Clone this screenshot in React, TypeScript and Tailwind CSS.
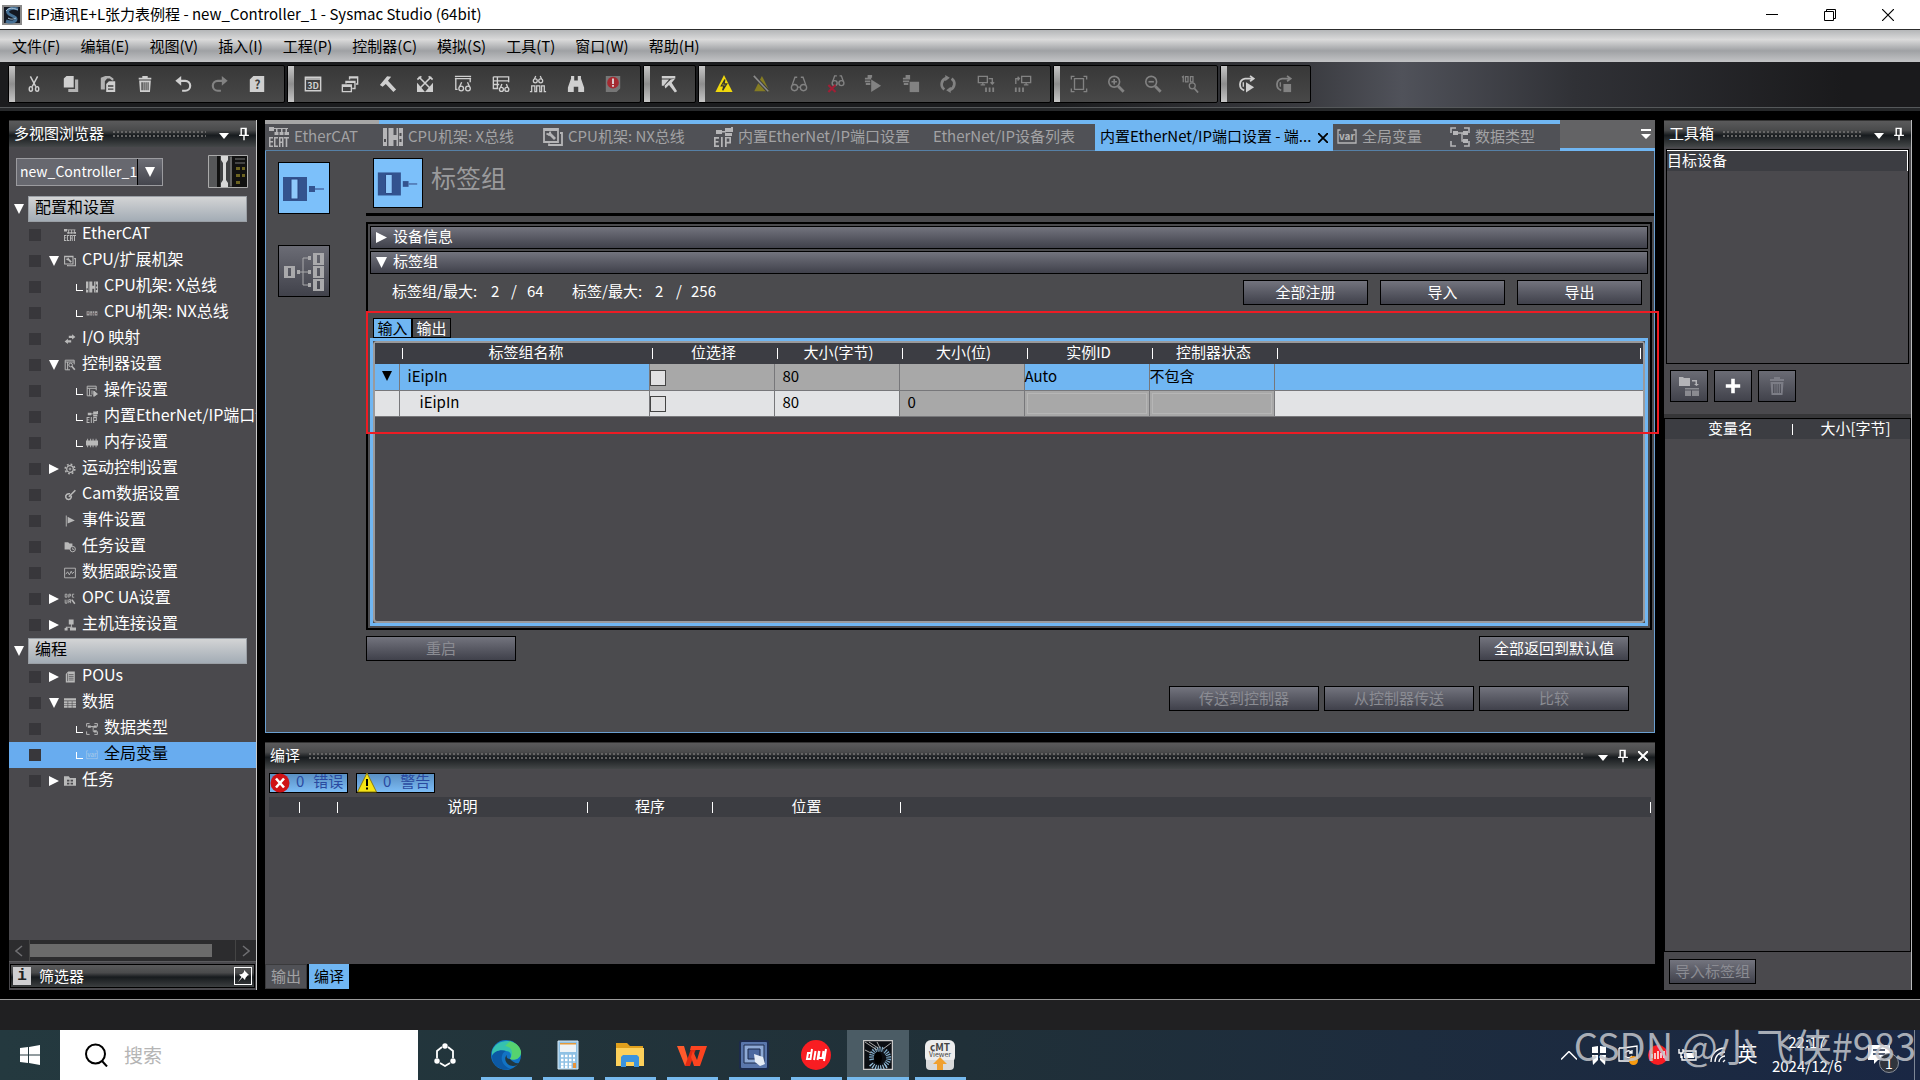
import { type FC, type ReactNode, useState } from "react";
import clsx from "clsx";

const svgText = "Noto Sans CJK SC, sans-serif";

const icons: Record<string, ReactNode> = {
	cut: (
		<g fill="none" stroke="currentColor" strokeWidth="1.6">
			<path d="M6 1.5 12 13M14 1.5 8 13" />
			<ellipse cx="6.5" cy="15.5" rx="1.8" ry="2.6" />
			<ellipse cx="13.5" cy="15.5" rx="1.8" ry="2.6" />
		</g>
	),
	copy: (
		<g fill="currentColor">
			<path d="M5 1h8v13H2V4z" />
			<path d="M14.5 5H18v14H7v-3.5h7.5z" opacity=".8" />
		</g>
	),
	paste: (
		<g fill="currentColor">
			<path d="M2 3 7 1h5l4 3v2h-1.5L12 4H9L6.500 7v9H2z" opacity=".8" />
			<path d="M11 7h7v12H8v-9zm-1 4.500V13h6v-1.500zm0 3.500v1.500h6V15z" fillRule="evenodd" />
		</g>
	),
	trash: (
		<g fill="currentColor">
			<path d="M7 1h6v2h4v2H3V3h4z" />
			<path d="M3.5 6h13l-1 13h-11zM6 8v9h1.500V8zm2.400 0v9h1.200V8zm2.200 0v9h1.200V8zm2.200 0v9H14V8z" fillRule="evenodd" />
		</g>
	),
	undo: (
		<g fill="none" stroke="currentColor" strokeWidth="2.4">
			<path d="M4 6.5h8.500a5.200 5.200 0 0 1 0 11H9" />
			<path d="M8 1 1.500 6.500 8 12z" fill="currentColor" stroke="none" />
		</g>
	),
	redo: (
		<g fill="none" stroke="currentColor" strokeWidth="2.4">
			<path d="M16 6.5H7.500a5.200 5.200 0 0 0 0 11H11" />
			<path d="M12 1l6.500 5.500L12 12z" fill="currentColor" stroke="none" />
		</g>
	),
	help: (
		<g>
			<path d="M6 1h12v18H2V5z" fill="currentColor" />
			<text x="10.5" y="15" fontSize="13" fontWeight="700" textAnchor="middle" fill="#3c3c3c" fontFamily={svgText}>?</text>
		</g>
	),
	threeD: (
		<g>
			<path d="M1.5 2.5h17v15h-17zM1.5 4.500h17" fill="none" stroke="currentColor" strokeWidth="1.6" />
			<text x="10" y="15" fontSize="10" fontWeight="700" textAnchor="middle" fill="currentColor" fontFamily={svgText}>3D</text>
		</g>
	),
	windows: (
		<g fill="none" stroke="currentColor" strokeWidth="1.5">
			<path d="M1.5 11h10v7.500h-10zM1.500 12.500h10" />
			<path d="M5.500 9.500V7h10v8h-3M5.500 8.200h10" />
			<path d="M9.500 5V2h9v8h-2M9.500 3h9" />
		</g>
	),
	hammer: <path d="M1 11 9 1.500l4.500.5L10 6.500 19 16l-3 3-8.500-9L4 13z" fill="currentColor" />,
	tools: (
		<g fill="none" stroke="currentColor" strokeWidth="1.8">
			<path d="M3 2 16 15M17 2 4 15" />
			<path d="M1.5 5 6 1.500M14 1.500 18.500 5" />
			<path d="M2 11l6 7H2zM18 11v7h-6z" fill="currentColor" />
		</g>
	),
	watch: (
		<g fill="none" stroke="currentColor" strokeWidth="1.5">
			<path d="M1 4h18M1 1.500h18M2 3v13h2M18 3v5" />
			<circle cx="8" cy="15" r="2.6" />
			<circle cx="15.500" cy="15" r="2.6" />
			<path d="M6.500 12.500 8.500 8M17 12.500 15 8" />
		</g>
	),
	watchTable: (
		<g fill="none" stroke="currentColor" strokeWidth="1.5">
			<path d="M1.5 2h17v6M1.5 2v13H7M1.5 6.500h17M1.5 10.500H8M6 2v13" />
			<circle cx="10.500" cy="16" r="2.2" />
			<circle cx="16.500" cy="16" r="2.2" />
			<path d="M9.500 14l1.500-4M17.500 14 16 10" />
		</g>
	),
	watchWave: (
		<g fill="none" stroke="currentColor" strokeWidth="1.4">
			<circle cx="7" cy="6.500" r="2.200" />
			<circle cx="13" cy="6.500" r="2.200" />
			<path d="M6 4.500 7.500 1M14 4.500 12.500 1M1 18.500h2V12h3.500v6.500h2V12H12v6.500h2V12h3v6.500h2" />
		</g>
	),
	binoculars: <path d="M4.500 1H8v5h4V1h3.500v3L19 14v5h-6.500v-6h-5v6H1v-5L4.500 4z" fill="currentColor" />,
	alertDoc: (
		<g>
			<path d="M2 1h16v14l-4 4H2z" fill="#777" />
			<circle cx="10" cy="8.500" r="6.500" fill="#a52a31" />
			<path d="M9 4h2v6H9zM9 11h2v2H9z" fill="#ddd" />
		</g>
	),
	build: (
		<g fill="currentColor">
			<path d="M2 1h15v3H2zM2 5h8L4 12H2z" />
			<path d="m5 12 7-7 5-1-4 4.500L19 18l-2.500 1.500L10 11l-4 4z" />
		</g>
	),
	online: (
		<g>
			<path d="M10 0 19.500 19H.500z" fill="#f0d80c" />
			<path d="M11 5 7 12h3l-1.500 5 4.500-7h-3z" fill="none" stroke="#333" strokeWidth="1.400" />
		</g>
	),
	offline: (
		<g>
			<path d="M11 1 19.500 18h-17z" fill="#857c22" />
			<path d="m2 1 16 17" stroke="#3c3c3c" strokeWidth="4" />
			<path d="m2 1 16 17" stroke="#8a8a8a" strokeWidth="1.800" />
		</g>
	),
	glasses: (
		<g fill="none" stroke="currentColor" strokeWidth="1.500">
			<circle cx="5" cy="14" r="3.500" />
			<circle cx="15" cy="14" r="3.500" />
			<path d="M2.500 11 5.500 2.500h2.500M17.500 11l-3-8.500H12M8.500 13.500h3" />
		</g>
	),
	glassesOff: (
		<g fill="none" stroke="currentColor" strokeWidth="1.500">
			<circle cx="8.500" cy="9" r="2.800" />
			<circle cx="16" cy="9" r="2.800" />
			<path d="M6.500 7 8.500 1H11M18 7l-2-6h-2" />
			<path d="m1.500 11 8 8M9.500 11l-8 8" stroke="#a01f35" strokeWidth="2.400" />
		</g>
	),
	run: (
		<g fill="currentColor">
			<path d="M1 3h7v2H1zM1 6h6v2H1zM2 9h5v2H2zM4 0h5v3H4z" />
			<path d="m8 5 11 7-11 7z" />
		</g>
	),
	stop: (
		<g fill="currentColor">
			<path d="M1 3h8v2H1zM1 6h7v2H1zM2 9h5v2H2zM4 0h5v3H4z" />
			<path d="M8.500 7.500H19V19H8.500z" />
		</g>
	),
	cycle: (
		<g fill="none" stroke="currentColor" strokeWidth="3">
			<path d="M8 3.500a7 7 0 0 0-2 12.500M12 16.500A7 7 0 0 0 14 4" />
			<path d="M7 0l5 3-5 4zM13 20l-5-3 5-4z" fill="currentColor" stroke="none" />
		</g>
	),
	toDevice: (
		<g fill="none" stroke="currentColor" strokeWidth="1.5">
			<path d="M1.500 1.500h10v7h-10zM4 11h5M6.500 9v2M13 4h4v6M15 8l2 2 2-2" />
			<path d="M9 14h2v5H9zM13 14h2v5h-2zM17 14h2v5h-2z" fill="currentColor" stroke="none" />
		</g>
	),
	fromDevice: (
		<g fill="none" stroke="currentColor" strokeWidth="1.5">
			<path d="M8.500 1.500h10v7h-10zM11 11h5M13.500 9v2M2 10V4h4M4 2l2 2-2 2" />
			<path d="M1 14h2v5H1zM5 14h2v5H5zM9 14h2v5H9z" fill="currentColor" stroke="none" />
		</g>
	),
	fit: (
		<g fill="none" stroke="currentColor" strokeWidth="1.5">
			<path d="M5 4h10v12H5zM1.500 5V1.500H5M15 1.500h3.500V5M18.500 15v3.500H15M5 18.500H1.500V15" />
		</g>
	),
	zoomIn: (
		<g fill="none" stroke="currentColor" strokeWidth="1.8">
			<circle cx="8" cy="7.500" r="6" />
			<path d="M5 7.500h6M8 4.500v6" />
			<path d="m12.500 12.500 6 6" strokeWidth="3.200" />
		</g>
	),
	zoomOut: (
		<g fill="none" stroke="currentColor" strokeWidth="1.8">
			<circle cx="8" cy="7.500" r="6" />
			<path d="M5 7.500h6" />
			<path d="m12.500 12.500 6 6" strokeWidth="3.200" />
		</g>
	),
	zoom100: (
		<g fill="none" stroke="currentColor" strokeWidth="1.4">
			<path d="M1 2.500 2.500 1.500V8M5 1.700h2.800v6H5zM10.500 1.700h2.800v6h-2.800z" />
			<circle cx="12.500" cy="12" r="3.300" />
			<path d="m15 15 4 4.500" strokeWidth="2" />
		</g>
	),
	simRun: (
		<g fill="none" stroke="currentColor" strokeWidth="2">
			<path d="M18 4H9a6.700 6.700 0 0 0-1 13M14.500 1l4 3-4 3" />
			<path d="m10 8 9 5.500-9 6z" fill="currentColor" stroke="none" />
			<path d="M7 8v5" strokeWidth="1.500" />
		</g>
	),
	simStop: (
		<g fill="none" stroke="currentColor" strokeWidth="2">
			<path d="M17 4H9a6.700 6.700 0 0 0-1 13M14.500 1l4 3-4 3" />
			<path d="M10.500 10H19v9h-8.500z" fill="currentColor" stroke="none" />
			<path d="M7 8v5" strokeWidth="1.500" />
		</g>
	),
	ecat: (
		<g fill="currentColor">
			<path d="M0 0h5v4H0zM5 1h14v1H5zM7 2h1.500v4H7zM12 2h1.500v4H12zM16.500 2H18v4h-1.500zM5.500 5h4v3h-4zM10.500 5h4v3h-4zM15.500 5H20v3h-4.500z" />
			<path d="M0 10h4v1.500H1.500v2.500H4v1.500H1.500v3H4V20H0zM5 10h4v1.500H6.500v7H9V20H5zM10 10h4.500v10H13v-4h-1.500v4H10zM11.500 11.500v3H13v-3zM15 10h5v1.500h-1.700V20h-1.600v-8.500H15z" fillRule="evenodd" />
		</g>
	),
	rack: (
		<g fill="currentColor">
			<path d="M0 1h4v18H0zM5.500 1h5v18h-5zM10.500 8h3V1H20v18h-6.500v-6h-3z" />
			<path d="M1 12h2v3H1zM16.500 6h2v3h-2zM16.500 12h2v3h-2zM15 1h.8v18H15z" fill="#4c4c50" />
		</g>
	),
	nxRack: (
		<g fill="currentColor">
			<path d="M1 7h5v7H1zM7 7h3v7H7zM11 7h3v7h-3zM15 7h4v7h-4z" opacity=".8" />
			<path d="M2 9h3v2H2zM8 10h1v3H8zM12 10h1v3h-1zM16 10h2v2h-2z" fill="#5b4648" />
		</g>
	),
	cpuRack: (
		<g fill="none" stroke="currentColor" strokeWidth="1.8">
			<path d="M1 2h14v13H1zM1 3h14" />
			<path d="m6 6 6 6" strokeWidth="2.800" />
			<path d="M3.500 6.500 6 8l1.500-3.500" />
			<path d="M17 6h2v12H6v-1.500" />
		</g>
	),
	eip: (
		<g fill="currentColor">
			<path d="M3 3h6v4H3zM9 4h4v1.500H9zM12 1h7v4h-7zM12 6h7v3h-7zM18 0h2v5h-2z" />
			<path d="M1 10h5v1.700H2.700v2.300H5.500v1.600H2.700v2.700H6V20H1zM8 10h1.700v10H8zM12 10h6v6.500h-4.300V20H12zM13.700 11.600v3.200h2.600v-3.200z" fillRule="evenodd" />
		</g>
	),
	io: <path d="M19 6.500 13.500 2v2.500H8v4h5.500V11zM1 14l5.500-4.500V12H12v4H6.500v2.500z" fill="currentColor" />,
	ctrl: (
		<g fill="none" stroke="currentColor" strokeWidth="1.6">
			<path d="M2 2h15v7M2 2v16h8M2 5h15M6 5v13" />
			<circle cx="11" cy="10" r="3" />
			<path d="m13 12 5 6" strokeWidth="2.800" />
		</g>
	),
	op: (
		<g fill="none" stroke="currentColor" strokeWidth="1.6">
			<path d="M2 2h15v7M2 2v16h8M2 5.500h15M6 6v12M10 9v7" />
			<path d="m13 10 6 5-6 4z" fill="currentColor" />
		</g>
	),
	memory: (
		<path d="M0 6h2V3h1.500v3H7V3h1.500v3H11V3h1.500v3H16V3h1.500v3H20v8h-2.500v3H16v-3h-3.500v3H11v-3H8.500v3H7v-3H3.500v3H2v-3H0z" fill="currentColor" />
	),
	gear: (
		<g fill="none" stroke="currentColor">
			<circle cx="10" cy="10" r="5.500" strokeWidth="2.200" />
			<circle cx="10" cy="10" r="8" strokeWidth="2.600" strokeDasharray="3 3.280" />
			<circle cx="10" cy="10" r="1.500" strokeWidth="1.500" />
		</g>
	),
	cam: (
		<g fill="none" stroke="currentColor" strokeWidth="2.600">
			<path d="M10 8c-4-1-8 2-7 6s8 5 9 0c1-2-1-3-2-3" />
			<path d="M8 13 19 2" />
		</g>
	),
	flag: (
		<g fill="currentColor">
			<path d="M3 1h1.500v18H3z" />
			<path d="m6 3 12 6-12 5z" />
		</g>
	),
	folderClock: (
		<g>
			<path d="M1 2h6l2 2h5v10H1z" fill="currentColor" />
			<circle cx="14.500" cy="13.500" r="4.500" fill="#4a494d" stroke="currentColor" strokeWidth="1.600" />
			<path d="M14.500 11v3h2.500" fill="none" stroke="currentColor" strokeWidth="1.400" />
		</g>
	),
	trace: (
		<g fill="none" stroke="currentColor" strokeWidth="1.5">
			<path d="M1 2h18v16H1z" />
			<path d="m3 12 3-4 3 5 3-6 2 4 3-3" />
		</g>
	),
	opc: (
		<g fill="none" stroke="currentColor" strokeWidth="1.4">
			<path d="M2 2h3v5H2zM8 8V2h3v3H8M17 2h-3v5h3M2 11v6h3v-6M8 17v-6h3v6M8 14h3" />
			<path d="m13 11 5 7" strokeWidth="2.600" />
		</g>
	),
	host: (
		<g fill="currentColor">
			<path d="M8 1h8v8H8zM11.500 9H13v4h-1.500zM3 13h11v1.500H4.500V17H3z" />
			<path d="M1 15h5v4H1zM10 14h10v5H10z" />
		</g>
	),
	pou: (
		<g>
			<path d="M7 1h11v18H3V5z" fill="currentColor" />
			<path d="M8 6h8M8 9h8M8 12h8M8 15h8M6 4v13" stroke="#4a494d" strokeWidth="1.200" />
		</g>
	),
	table: (
		<path d="M0 2h20v4H0zM0 7h6v3H0zM7 7h6v3H7zM14 7h6v3h-6zM0 11h6v3H0zM7 11h6v3H7zM14 11h6v3h-6zM0 15h6v3H0zM7 15h6v3H7zM14 15h6v3h-6z" fill="currentColor" />
	),
	types: (
		<g fill="none" stroke="currentColor" strokeWidth="1.6">
			<path d="M1 6V1h5M14 1h5v5M19 14v5h-5M6 19H1v-5" />
			<path d="M7 6h5v8h3M8 6h6" strokeWidth="1.400" />
			<path d="M3 4h5v4H3zM13 4h5v4h-5zM13 12h5v4h-5z" fill="currentColor" stroke="none" />
		</g>
	),
	vars: (
		<g>
			<path d="M3.500 3H1v13h2.500M16.500 3H19v13h-2.500M1 16h18" fill="none" stroke="currentColor" strokeWidth="1.3" />
			<text x="10" y="12.500" fontSize="10" fontWeight="700" textAnchor="middle" fill="currentColor" fontFamily={svgText}>var</text>
		</g>
	),
	task: (
		<g>
			<path d="M0 2h8l2 3h10v13H0z" fill="currentColor" />
			<path d="M5 8h4v3H5zM11 8h4v3h-4zM5 13h4v3H5zM11 13h4v3h-4z" fill="#4a494d" />
		</g>
	),
	importTree: (
		<g fill="currentColor">
			<path d="M0 1h4l1 1h6v8H0zM13 4h5v5h-1.500V5.500H13zM15 8h5l-2.500 2z" />
			<path d="M6 12h14v1.500H6zM6 14.500h6V20H6zM13 14.500h7V20h-7z" opacity=".6" />
		</g>
	),
	plus: <path d="M8 2h4v6h6v4h-6v6H8v-6H2V8h6z" fill="currentColor" />,
	pin: (
		<g fill="none" stroke="currentColor" strokeWidth="2">
			<path d="M6 11V2h7v9M3 12h14M10 12v7M12 3v8" />
		</g>
	),
};

const Icon: FC<{ name: string; className?: string }> = ({ name, className }) => (
	<svg viewBox="0 0 20 20" className={clsx("shrink-0", className)} aria-hidden="true">
		{icons[name]}
	</svg>
);

const Arrow: FC<{ open?: boolean; className?: string }> = ({ open, className }) => (
	<svg viewBox="0 0 10 10" className={clsx("h-2.5 w-2.5 shrink-0", className)} aria-hidden="true">
		<path d={open ? "M0 0h10L5 10z" : "M0 0l10 5-10 5z"} fill="currentColor" />
	</svg>
);

const menus = ["文件(F)", "编辑(E)", "视图(V)", "插入(I)", "工程(P)", "控制器(C)", "模拟(S)", "工具(T)", "窗口(W)", "帮助(H)"];

// a leading "-" marks a disabled command
const toolGroups = [
	{ width: "w-[277px]", items: ["cut", "copy", "paste", "trash", "undo", "-redo", "help"] },
	{ width: "w-[354px]", items: ["threeD", "windows", "hammer", "tools", "watch", "watchTable", "watchWave", "binoculars", "alertDoc"] },
	{ width: "w-[53px]", items: ["build"] },
	{ width: "w-[353px]", items: ["online", "offline", "-glasses", "-glassesOff", "-run", "-stop", "-cycle", "-toDevice", "-fromDevice"] },
	{ width: "w-[165px]", items: ["-fit", "-zoomIn", "-zoomOut", "-zoom100"] },
	{ width: "w-[91px]", items: ["simRun", "-simStop"] },
];

type Node = { label: string; icon: string; child?: boolean; open?: boolean; selected?: boolean };

const configNodes: Node[] = [
	{ label: "EtherCAT", icon: "ecat" },
	{ label: "CPU/扩展机架", icon: "cpuRack", open: true },
	{ label: "CPU机架: X总线", icon: "rack", child: true },
	{ label: "CPU机架: NX总线", icon: "nxRack", child: true },
	{ label: "I/O 映射", icon: "io" },
	{ label: "控制器设置", icon: "ctrl", open: true },
	{ label: "操作设置", icon: "op", child: true },
	{ label: "内置EtherNet/IP端口设置", icon: "eip", child: true },
	{ label: "内存设置", icon: "memory", child: true },
	{ label: "运动控制设置", icon: "gear", open: false },
	{ label: "Cam数据设置", icon: "cam" },
	{ label: "事件设置", icon: "flag" },
	{ label: "任务设置", icon: "folderClock" },
	{ label: "数据跟踪设置", icon: "trace" },
	{ label: "OPC UA设置", icon: "opc", open: false },
	{ label: "主机连接设置", icon: "host", open: false },
];

const programNodes: Node[] = [
	{ label: "POUs", icon: "pou", open: false },
	{ label: "数据", icon: "table", open: true },
	{ label: "数据类型", icon: "types", child: true },
	{ label: "全局变量", icon: "vars", child: true, selected: true },
	{ label: "任务", icon: "task", open: false },
];

const TitleBar: FC = () => (
	<header className="flex h-[30px] shrink-0 items-center border-b border-[#2c2c2c] bg-white text-black">
		<svg viewBox="0 0 20 20" className="ml-[2px] h-5 w-5" aria-hidden="true">
			<path d="M0 0h20v20H0z" fill="#8a8a8a" />
			<path d="M2 2h16v16H2z" fill="#131722" />
			<path d="M16 4C9 2 4 5 6 8s8 3 8 6-5 4-10 2" fill="none" stroke="#456f94" strokeWidth="3" />
			<path d="M4 6c3-4 8-3 12-1M6 13c3 2 6 1 8 0" fill="none" stroke="#a8c4da" />
		</svg>
		<h1 className="ml-[5px] flex-1 pb-0.5 text-[15px] leading-6">EIP通讯E+L张力表例程 - new_Controller_1 - Sysmac Studio (64bit)</h1>
		<div className="flex pr-[3px]">
			<button type="button" aria-label="最小化" className="flex h-7 w-[58px] items-center justify-center">
				<span className="h-px w-3 bg-black" />
			</button>
			<button type="button" aria-label="还原" className="flex h-7 w-[58px] items-center justify-center">
				<svg viewBox="0 0 12 12" className="h-3 w-3" fill="none" stroke="#000">
					<path d="M.5 2.5h9v9h-9zM2.5 2.5v-2h9v9h-2" />
				</svg>
			</button>
			<button type="button" aria-label="关闭" className="flex h-7 w-[58px] items-center justify-center">
				<svg viewBox="0 0 12 12" className="h-3 w-3" fill="none" stroke="#000" strokeWidth="1.2">
					<path d="m0 0 12 12M12 0 0 12" />
				</svg>
			</button>
		</div>
	</header>
);

const MenuBar: FC = () => (
	<nav className="flex h-8 shrink-0 items-center gap-5 bg-[linear-gradient(#b4b6b8,#dadada_30%,#9fa1a4_65%,#c3c4c6)] pb-px pl-3 text-[15px] leading-6 text-black">
		{menus.map((m) => (
			<button key={m} type="button" className="whitespace-nowrap">
				{m}
			</button>
		))}
	</nav>
);

const Toolbar: FC = () => (
	<div className="flex h-[45px] shrink-0 gap-0.5 bg-[linear-gradient(90deg,#1b1c1e_0%,#1b1c1e_55%,#3a3b40_68%,#50525a_73%,#303136_82%,#1a1a1c_96%)] pt-[3px] pb-1 pl-2">
		{toolGroups.map((g) => (
			<div key={g.items[0]} role="toolbar" className={clsx("flex rounded-xs border border-black bg-linear-to-b from-[#383838] to-[#484848] pr-2", g.width)}>
				<span className="w-[6px] bg-linear-to-b from-[#c6c6c6] via-[#8e8e8e] to-[#c6c6c6]" />
				{g.items.map((item) => {
					const off = item.startsWith("-");
					const name = off ? item.slice(1) : item;
					return (
						<button
							key={name}
							type="button"
							aria-label={name}
							disabled={off}
							className={clsx("flex flex-1 items-center justify-center", off ? "text-[#828282]" : "text-[#cfcfcf]")}
						>
							<Icon name={name} className="h-[18px] w-[18px]" />
						</button>
					);
				})}
			</div>
		))}
	</div>
);

const PanelHeader: FC<{ title: string; closable?: boolean }> = ({ title, closable }) => (
	<div className="flex h-[27px] shrink-0 items-center border-t border-[#333] bg-[linear-gradient(#5a5a5b,#4a4b4c_35%,#171b1e_55%,#444748)] pr-0.5 pl-[5px] text-white">
		<h2 className="pb-0.5 text-[15px] leading-6">{title}</h2>
		<span className="mx-2 h-2 flex-1 bg-[radial-gradient(circle,#666_1px,transparent_1px)] bg-[length:4px_4px]" />
		<button type="button" aria-label="窗口位置" className="flex w-5 justify-center pt-1">
			<svg viewBox="0 0 10 6" className="h-1.5 w-2.5" fill="currentColor">
				<path d="M0 0h10L5 6z" />
			</svg>
		</button>
		<button type="button" aria-label="自动隐藏" className="flex w-5 justify-center">
			<Icon name="pin" className="h-3.5 w-3.5" />
		</button>
		{closable && (
			<button type="button" aria-label="关闭" className="flex w-5 justify-center">
				<svg viewBox="0 0 10 10" className="h-2.5 w-2.5" fill="none" stroke="currentColor" strokeWidth="2">
					<path d="m0 0 10 10M10 0 0 10" />
				</svg>
			</button>
		)}
	</div>
);

const TreeRow: FC<{ node: Node }> = ({ node }) => (
	<li className={clsx("flex h-[26px] items-center pl-5", node.selected ? "bg-[#68acef] text-black" : "text-white")}>
		<span className="h-3 w-3 shrink-0 bg-[#38373b]" />
		{node.child ? (
			<span className="ml-[35px] h-[7px] w-[7px] shrink-0 border-b border-l border-white" />
		) : (
			<span className="ml-2 flex w-[15px] shrink-0">{node.open !== undefined && <Arrow open={node.open} className="text-white" />}</span>
		)}
		<Icon name={node.icon} className={clsx("h-3 w-3", node.child && "ml-[3px]", node.selected ? "text-[#9cc4ea]" : "text-[#b9b9b9]")} />
		<a href="#" className="ml-1.5 pb-1.5 text-[16px] leading-5 whitespace-nowrap">
			{node.label}
		</a>
	</li>
);

const TreeSection: FC<{ title: string; nodes: Node[] }> = ({ title, nodes }) => (
	<section>
		<div className="flex h-[26px] items-center pr-[9px] pl-[5px]">
			<Arrow open className="mr-1 text-white" />
			<h3 className="h-full flex-1 border border-[#9a9fa5] bg-linear-to-b from-[#d3d4d5] to-[#a3acb5] pl-1.5 text-[16px] leading-[19px] text-black">{title}</h3>
		</div>
		<ul>
			{nodes.map((n) => (
				<TreeRow key={n.label} node={n} />
			))}
		</ul>
	</section>
);

const Explorer: FC = () => (
	<aside className="flex w-[248px] shrink-0 flex-col overflow-hidden border-r border-[#c8c8c8] bg-[#4a494d]">
		<PanelHeader title="多视图浏览器" />
		<div className="flex h-[49px] shrink-0 items-center justify-between pr-2 pl-[7px]">
			<div className="relative h-7 w-[147px]">
				<select aria-label="控制器" className="h-7 w-full appearance-none border border-[#9b9b9f] bg-[#67686f] pb-0.5 pl-[3px] text-[14px] text-white">
					<option>new_Controller_1</option>
				</select>
				<span className="pointer-events-none absolute top-px right-px flex h-[26px] w-[25px] items-center justify-center border-l border-black bg-linear-to-b from-[#6c6d75] to-[#45464e] text-white">
					<Arrow open />
				</span>
			</div>
			<svg viewBox="0 0 40 33" className="h-[33px] w-10" aria-hidden="true">
				<path d="M.5.5h39v32H.5z" fill="#3d3e40" stroke="#aaa" />
				<path d="M1 1h8v31H1z" fill="#565759" />
				<path d="M9 1h3v31H9zM24 1h15v31H24z" fill="#111" />
				<path d="M13 1h7v4l-2 3v17l2 3v4h-7v-4l2-3V8l-2-3z" fill="#d8d8d8" />
				<path d="M22 2h2v29h-2z" fill="#666" />
				<path d="M28 12h4v3h-4zM28 19h4v3h-4zM28 26h4v3h-4zM34 12h3v3h-3zM34 19h3v3h-3z" fill="#6c6320" />
				<path d="M27 4h10M27 8h10" stroke="#444" strokeWidth="2" />
			</svg>
		</div>
		<div className="flex-1">
			<TreeSection title="配置和设置" nodes={configNodes} />
			<TreeSection title="编程" nodes={programNodes} />
		</div>
		<div className="flex h-[22px] shrink-0 border-b border-[#5b5b5e] bg-[#2c2c2e] text-[#6f6f72]">
			<button type="button" aria-label="向左滚动" className="flex w-[21px] items-center justify-center border-r border-[#444]">
				<svg viewBox="0 0 8 12" className="h-3 w-2" fill="none" stroke="currentColor" strokeWidth="1.5">
					<path d="M7 1 1 6l6 5" />
				</svg>
			</button>
			<div className="flex flex-1 items-center">
				<span className="h-[13px] w-[182px] bg-[#6b6b6b]" />
			</div>
			<button type="button" aria-label="向右滚动" className="flex w-[21px] items-center justify-center border-l border-[#444]">
				<svg viewBox="0 0 8 12" className="h-3 w-2" fill="none" stroke="currentColor" strokeWidth="1.5">
					<path d="m1 1 6 5-6 5" />
				</svg>
			</button>
		</div>
		<div className="mx-px my-0.5 flex h-6 shrink-0 items-center border border-black bg-[linear-gradient(#5a5a5b,#4a4b4c_35%,#171b1e_55%,#3c3f40)] px-0.5 text-white">
			<span className="flex h-[18px] w-[18px] items-center justify-center bg-[#cfcfd1] font-['Liberation_Mono',monospace] text-[16px] leading-4 font-bold text-[#222]">i</span>
			<h2 className="ml-2 flex-1 text-[15px] leading-6">筛选器</h2>
			<button type="button" aria-label="固定" className="flex h-[18px] w-[18px] items-center justify-center border border-white">
				<svg viewBox="0 0 12 12" className="h-3 w-3" fill="currentColor">
					<path d="m7 0 5 5-1.5.5-2 2.500-.5 2-2.500-2.500L1 12l3.500-5L2 4.500 5 4l2-2z" />
				</svg>
			</button>
		</div>
	</aside>
);

const docTabs = [
	{ label: "EtherCAT", icon: "ecat", width: "w-[114px]", top: "border-[#a6a6a6]" },
	{ label: "CPU机架: X总线", icon: "rack", width: "w-[160px]", top: "border-[#70b6f2]" },
	{ label: "CPU机架: NX总线", icon: "cpuRack", width: "w-[170px]", top: "border-[#70b6f2]" },
	{ label: "内置EtherNet/IP端口设置", icon: "eip", width: "w-[220px]", top: "border-[#70b6f2]" },
	{ label: "EtherNet/IP设备列表", width: "w-[166px]", top: "border-[#70b6f2]" },
	{ label: "内置EtherNet/IP端口设置 - 端...", active: true, width: "w-[238px]", top: "border-[#70b6f2]" },
	{ label: "全局变量", icon: "vars", width: "w-[113px]", top: "border-[#70b6f2]" },
	{ label: "数据类型", icon: "types", width: "w-[114px]", top: "border-[#70b6f2]" },
];

const DocTabs: FC = () => (
	<div className="flex h-[31px] shrink-0 bg-[#636365]">
		<div role="tablist" className="flex">
			{docTabs.map((t) => (
				<button
					key={t.label}
					type="button"
					role="tab"
					aria-selected={!!t.active}
					className={clsx(
						"flex items-center border-t-4 text-[15px] leading-5 whitespace-nowrap",
						t.width,
						t.top,
						t.active ? "justify-between bg-[#70b6f2] px-[5px] text-black" : "gap-[5px] border-b border-b-[#5680a6] bg-[#505156] pl-[4px] text-[#a2a2a4]",
					)}
				>
					{t.icon && <Icon name={t.icon} className="h-5 w-5 text-[#b5b5b7]" />}
					<span className="pb-[3px]">{t.label}</span>
					{t.active && (
						<svg viewBox="0 0 10 10" className="h-2.5 w-2.5" fill="none" stroke="#000" strokeWidth="1.8">
							<path d="m0 0 10 10M10 0 0 10" />
						</svg>
					)}
				</button>
			))}
		</div>
		<div className="flex flex-1 items-center justify-end border-b-3 border-[#70b6f2] pr-1">
			<button type="button" aria-label="标签列表" className="text-white">
				<svg viewBox="0 0 10 10" className="h-2.5 w-2.5" fill="currentColor">
					<path d="M0 0h10v2H0zM0 5h10l-5 5z" />
				</svg>
			</button>
		</div>
	</div>
);

const TagSetGlyph: FC = () => (
	<svg viewBox="0 0 50 50" className="h-[50px] w-[50px]" aria-hidden="true">
		<path d="M4 14h24v24H4z" fill="#33538f" />
		<path d="M12 16h7v20h-7z" fill="#8fc9fb" stroke="#2a4580" />
		<path d="M30 23h6v6h-6z" fill="#33538f" />
		<path d="M36 26h9" stroke="#4a6da8" strokeWidth="1.5" />
	</svg>
);

const GradButton: FC<{ children: ReactNode; className: string; disabled?: boolean }> = ({ children, className, disabled }) => (
	<button
		type="button"
		disabled={disabled}
		className={clsx(
			"h-[25px] border border-black bg-linear-to-b from-[#73747e] to-[#40414b] pb-0.5 text-[15px] leading-5 whitespace-nowrap",
			disabled ? "text-[#8b8c93]" : "text-white",
			className,
		)}
	>
		{children}
	</button>
);

const SectionBar: FC<{ title: string; open?: boolean }> = ({ title, open }) => (
	<button type="button" aria-expanded={!!open} className="flex h-[23px] w-full items-center gap-[6px] border border-black bg-linear-to-b from-[#73747e] to-[#40414b] pl-[5px] text-left text-[15px] leading-[18px] text-white">
		<Arrow open={open} className="h-[11px] w-[11px]" />
		<span className="pb-[3px]">{title}</span>
	</button>
);

const columns = ["标签组名称", "位选择", "大小(字节)", "大小(位)", "实例ID", "控制器状态"];

const cell = "border-r border-b border-[#77777a] p-0 pb-0.5";

const TagTable: FC = () => (
	<table className="w-full table-fixed border-collapse text-[15px] leading-5 text-black">
		<colgroup>
			<col className="w-6" />
			<col className="w-[250px]" />
			<col className="w-[125px]" />
			<col className="w-[125px]" />
			<col className="w-[125px]" />
			<col className="w-[125px]" />
			<col className="w-[125px]" />
			<col />
		</colgroup>
		<thead>
			<tr className="h-[21px] bg-[#3c3d43] text-white">
				<td />
				{columns.map((c) => (
					<th key={c} className="p-0 font-normal">
						<div className="flex items-center pl-[3px]">
							<span className="h-[11px] w-px bg-white" />
							<span className="flex-1 pb-[3px] text-center leading-[18px]">{c}</span>
						</div>
					</th>
				))}
				<td className="p-0">
					<div className="flex items-center justify-between pr-0.5 pl-[3px]">
						<span className="h-[11px] w-px bg-white" />
						<span className="h-[11px] w-px bg-white" />
					</div>
				</td>
			</tr>
		</thead>
		<tbody>
			<tr className="h-[26px] bg-[#70b6f2]">
				<td className={clsx(cell, "pl-[6px]")}>
					<Arrow open className="w-3" />
				</td>
				<td className={clsx(cell, "pl-2")}>iEipIn</td>
				<td className={clsx(cell, "bg-[#a8a8a8]")}>
					<input type="checkbox" aria-label="iEipIn 标签组位选择" className="mt-1 block h-4 w-4 appearance-none border border-[#444] bg-[#e2e2e3]" />
				</td>
				<td className={clsx(cell, "bg-[#a8a8a8] pl-2")}>80</td>
				<td className={clsx(cell, "bg-[#a8a8a8]")} />
				<td className={cell}>Auto</td>
				<td className={cell}>不包含</td>
				<td className="border-b border-[#77777a]" />
			</tr>
			<tr className="h-[26px] bg-[#e2e3e5]">
				<td className={cell} />
				<td className={clsx(cell, "pl-5")}>iEipIn</td>
				<td className={cell}>
					<input type="checkbox" aria-label="iEipIn 标签位选择" className="mt-1 block h-4 w-4 appearance-none border border-[#444] bg-[#e2e2e3]" />
				</td>
				<td className={clsx(cell, "pl-2")}>80</td>
				<td className={clsx(cell, "bg-[#a8a8a8] pl-2")}>0</td>
				<td className={clsx(cell, "bg-[#a8a8a8] pt-0.5 pr-0.5 pl-0.5")}>
					<div className="h-[21px] border border-[#b6b6b6]" />
				</td>
				<td className={clsx(cell, "bg-[#a8a8a8] pt-0.5 pr-0.5 pl-0.5")}>
					<div className="h-[21px] border border-[#b6b6b6]" />
				</td>
				<td className="border-b border-[#77777a]" />
			</tr>
		</tbody>
	</table>
);

const TagSetEditor: FC = () => {
	const [direction, setDirection] = useState("输入");

	return (
		<div className="flex flex-1 flex-col">
			<DocTabs />
			<div className="flex flex-1 border border-t-0 border-[#6a9fd0] bg-[#4b4b4e]">
				<div className="flex w-[100px] shrink-0 flex-col gap-[31px] pt-[11px] pl-3">
					<button type="button" aria-label="标签组" className="h-[52px] w-[52px] border border-black bg-[#7cc0fa]">
						<TagSetGlyph />
					</button>
					<button type="button" aria-label="连接" className="h-[52px] w-[52px] border border-black bg-linear-to-b from-[#6b6c75] to-[#41424b]">
						<svg viewBox="0 0 50 50" className="h-[50px] w-[50px]" fill="#a9a9ab">
							<path d="M5 20h11v12H5zm4 2v8h3v-8zM34 7h11v12H34zm4 2v8h3V9zM34 20h11v12H34zm4 2v8h3v-8zM34 33h11v12H34zm4 2v8h3v-8z" fillRule="evenodd" />
							<path d="M18 26h14M24 12v27M24 12h8M24 39h8" fill="none" stroke="#a9a9ab" />
							<path d="M18 24h3v4h-3zM29 24h3v4h-3zM29 10h3v4h-3zM29 37h3v4h-3z" />
						</svg>
					</button>
				</div>
				<div className="flex min-w-0 flex-1 flex-col">
					<div className="flex h-[65px] shrink-0 border-b-3 border-black pt-[7px] pl-[7px]">
						<div className="flex h-[50px] w-[50px] items-center justify-center overflow-hidden border border-black bg-[#7cc0fa]">
							<TagSetGlyph />
						</div>
						<h2 className="ml-2 text-[25px] leading-[38px] text-[#9a9a9c]">标签组</h2>
					</div>
					<div className="relative mt-1.5 mr-0.5 flex flex-1 flex-col">
						<div className="flex flex-1 flex-col border-2 border-black p-0.5">
							<SectionBar title="设备信息" />
							<div className="h-0.5" />
							<SectionBar title="标签组" open />
							<div className="flex h-[37px] shrink-0 items-center pr-1.5 pl-[22px] text-[15px] leading-6 text-white">
								<p className="flex pb-[3px]">
									<span className="w-[99px]">标签组/最大:</span>
									<span className="w-5">2</span>
									<span className="w-4">/</span>
									<span className="w-[45px]">64</span>
									<span className="w-[83px]">标签/最大:</span>
									<span className="w-[21px]">2</span>
									<span className="w-[15px]">/</span>
									<span>256</span>
								</p>
								<div className="ml-auto flex gap-3">
									<GradButton className="w-[125px]">全部注册</GradButton>
									<GradButton className="w-[125px]">导入</GradButton>
									<GradButton className="w-[125px]">导出</GradButton>
								</div>
							</div>
							<div role="tablist" className="mt-[7px] flex h-5 shrink-0 pl-[3px]">
								{["输入", "输出"].map((d) => (
									<button
										key={d}
										type="button"
										role="tab"
										aria-selected={direction === d}
										onClick={() => setDirection(d)}
										className={clsx(
											"w-[39px] border border-black pb-px text-[15px] leading-[17px]",
											direction === d ? "bg-[#70b6f2] text-black" : "bg-[#4b4b4e] text-white",
										)}
									>
										{d}
									</button>
								))}
							</div>
							<div className="flex flex-1 border-3 border-[#70b6f2]">
								<div className="flex-1 rounded-sm border-2 border-[#9a9a9c] bg-[#4a494d]">
									<TagTable />
								</div>
							</div>
						</div>
						<div className="pointer-events-none absolute top-[89px] right-[-7px] left-0 h-[123px] border-2 border-[#ed1c24]" />
					</div>
					<div className="mt-1.5 flex justify-between pr-[25px]">
						<GradButton className="w-[150px]" disabled>重启</GradButton>
						<GradButton className="w-[150px]">全部返回到默认值</GradButton>
					</div>
					<div className="mt-[25px] mb-[21px] flex justify-end gap-[5px] pr-[25px]">
						<GradButton className="w-[150px]" disabled>传送到控制器</GradButton>
						<GradButton className="w-[150px]" disabled>从控制器传送</GradButton>
						<GradButton className="w-[150px]" disabled>比较</GradButton>
					</div>
				</div>
			</div>
		</div>
	);
};

const BuildPanel: FC = () => (
	<div className="flex h-[248px] shrink-0 flex-col">
		<section className="flex h-[222px] flex-col bg-[#4a494d]">
			<PanelHeader title="编译" closable />
			<div className="flex gap-2 py-1 pl-1 text-[15px] leading-[14px] text-[#2a4aa0]">
				<button type="button" className="flex h-5 w-[79px] items-center border border-black bg-linear-to-b from-[#5a8fc2] to-[#7cbcf6]">
					<svg viewBox="0 0 20 20" className="h-5 w-5" aria-hidden="true">
						<circle cx="10" cy="10" r="9.5" fill="#cf1216" />
						<path d="m6 5.500 8 9M14 5.500l-8 9" stroke="#fff" strokeWidth="2.600" />
					</svg>
					<span className="ml-1.5 pb-1">0</span>
					<span className="ml-[9px] pb-1">错误</span>
				</button>
				<button type="button" className="flex h-5 w-[79px] items-center border border-black bg-linear-to-b from-[#5a8fc2] to-[#7cbcf6]">
					<svg viewBox="0 0 20 20" className="h-5 w-5" aria-hidden="true">
						<path d="M10 0 19.500 19H.500z" fill="#f6e413" stroke="#8a7a10" />
						<path d="M9 6h2v7H9zM9 14.500h2v2H9z" fill="#000" />
					</svg>
					<span className="ml-1.5 pb-1">0</span>
					<span className="ml-[9px] pb-1">警告</span>
				</button>
			</div>
			<table className="mr-1 ml-1 table-fixed border-collapse text-[15px] leading-4 text-white">
				<colgroup>
					<col className="w-[31px]" />
					<col className="w-[38px]" />
					<col className="w-[250px]" />
					<col className="w-[125px]" />
					<col className="w-[188px]" />
					<col />
				</colgroup>
				<thead>
					<tr className="h-5 bg-[#3c3d42]">
						{["", " ", "说明", "程序", "位置", "  "].map((c) => (
							<th key={c} className="p-0 font-normal">
								<div className="flex items-center">
									<span className="flex-1 pb-[3px] text-center">{c}</span>
									<span className="h-[11px] w-px bg-white" />
								</div>
							</th>
						))}
					</tr>
				</thead>
			</table>
		</section>
		<div role="tablist" className="flex h-[25px] gap-0.5 text-[15px] leading-5">
			<button type="button" role="tab" aria-selected={false} className="w-[42px] border border-[#3a3a3c] bg-[#505156] pb-px text-[#a2a2a4]">输出</button>
			<button type="button" role="tab" aria-selected className="w-10 bg-[#70b6f2] pb-px text-black">编译</button>
		</div>
	</div>
);

const Toolbox: FC = () => (
	<aside className="flex w-[248px] shrink-0 flex-col border-r border-[#b9b9bb] bg-[#4a494d]">
		<PanelHeader title="工具箱" />
		<div className="mx-0.5 mt-0.5 h-[215px] shrink-0 border border-black text-white">
			<h3 className="h-[21px] border-t border-r border-white bg-[#3c3d42] text-[15px] leading-[18px]">目标设备</h3>
		</div>
		<div className="flex shrink-0 gap-[6px] pt-1.5 pb-3 pl-1.5">
			<button type="button" aria-label="添加目标设备" disabled className="flex h-8 w-[38px] items-center justify-center border border-black bg-linear-to-b from-[#6b6c75] to-[#41424b] text-[#b4b4b8]">
				<Icon name="importTree" className="h-5 w-5" />
			</button>
			<button type="button" aria-label="添加" className="flex h-8 w-[38px] items-center justify-center border border-black bg-linear-to-b from-[#6b6c75] to-[#41424b] text-white">
				<Icon name="plus" className="h-[18px] w-[18px]" />
			</button>
			<button type="button" aria-label="删除" disabled className="flex h-8 w-[38px] items-center justify-center border border-black bg-linear-to-b from-[#6b6c75] to-[#41424b] text-[#7c7d86]">
				<Icon name="trash" className="h-5 w-5" />
			</button>
		</div>
		<div className="h-1 shrink-0 bg-[#363638]" />
		<div className="flex-1 border border-black text-white">
			<table className="w-full table-fixed border-collapse text-[15px] leading-4">
				<thead>
					<tr className="h-5 bg-[#3c3d42]">
						<th className="w-32 p-0 font-normal">
							<div className="flex items-center pl-1">
								<span className="flex-1 pb-0.5 text-center">变量名</span>
								<span className="h-[11px] w-px bg-white" />
							</div>
						</th>
						<th className="p-0 pb-0.5 pl-2 font-normal">大小[字节]</th>
					</tr>
				</thead>
			</table>
		</div>
		<div className="flex h-[38px] shrink-0 pt-[7px] pl-[5px]">
			<GradButton className="w-[87px]" disabled>导入标签组</GradButton>
		</div>
	</aside>
);

const apps: { name: string; active?: boolean; art: ReactNode }[] = [
	{
		name: "Edge",
		art: (
			<>
				<circle cx="15" cy="15" r="15" fill="#1273c4" />
				<path d="M1 12C4-2 27-3 30 12c0 7-6 9-11 7 2-3 1-8-4-8C8 10 3 12 1 16z" fill="#35c1b0" />
				<path d="M19 1c7 2 11 7 11 11 0 6-6 9-11 7 4-6 2-12-5-13z" fill="#5fd75f" opacity=".8" />
				<path d="M15 11c-6 2-7 14 5 18-9 3-19-3-19-13 2-5 9-7 14-5z" fill="#0c59a4" />
				<path d="M19 19c-3 0-4-2-3-4-4 3-1 11 6 11 3 0 5-1 6-3-3 1-6-1-9-4z" fill="#22373f" />
			</>
		),
	},
	{
		name: "计算器",
		art: (
			<>
				<path d="M5 1h20v28H5z" fill="#8fc1e4" stroke="#d7e9f5" />
				<path d="M7 4h16v8H7z" fill="#eef3f6" />
				<path d="M7 3h16v1.500H7z" fill="#e49a3a" />
				<path d="M8 16h14M8 20h14M8 24h14M8 27h14" stroke="#fff" strokeWidth="2.5" strokeDasharray="2.5 1.5" />
				<path d="M20 23h3v5h-3z" fill="#e8933a" />
			</>
		),
	},
	{
		name: "文件资源管理器",
		art: (
			<>
				<path d="M1 3h11l3 3h13v20H1z" fill="#e0a01c" />
				<path d="M1 8h28v18H1z" fill="#fcd05b" />
				<path d="M6 27V17l2-2h14l2 2v10h-5v-5h-8v5z" fill="#3b93dd" />
			</>
		),
	},
	{
		name: "WPS",
		art: (
			<>
				<path d="M0 6h7l6 20H8z" fill="#ff5a2c" />
				<path d="M8 26h5l7-20h-5z" fill="#e32a12" />
				<path d="M14 6h16l-7 20h-6l-3-9 2-6 4 9 3-10h-10z" fill="#fb4420" />
			</>
		),
	},
	{
		name: "触摸屏",
		art: (
			<>
				<rect x="1" y="1" width="28" height="28" rx="2" fill="#5a76ac" stroke="#1d2b4c" strokeWidth="2" />
				<path d="M5 5h20v18H5z" fill="#8ea9d6" stroke="#1d2b4c" />
				<path d="M9 9h12v10H9z" fill="#4c68a0" stroke="#1d2b4c" />
				<path d="m15 14 9 3 2 7-5 2-5-4z" fill="#e6ecf6" />
			</>
		),
	},
	{
		name: "DIY",
		art: (
			<>
				<circle cx="15" cy="15" r="15" fill="#f91d22" />
				<path d="M11 9 9.500 19H6l1-6h3M14.500 11 13 20M18 11l-1.500 9M18.500 11 17.500 18h4l1-7M25 9l-2 12" fill="none" stroke="#fff" strokeWidth="2" />
			</>
		),
	},
	{
		name: "Sysmac Studio",
		active: true,
		art: (
			<>
				<path d="M.5.5h29v29H.5z" fill="#0b0e13" stroke="#c8c8c8" strokeWidth="1.5" />
				<path d="M9 20c-2-8 4-13 12-10M22 11c5 4 5 10 0 14" fill="none" stroke="#7fa9c6" strokeWidth="5" strokeDasharray="1.2 1" />
				<path d="M8 24c4 5 11 5 16 1" fill="none" stroke="#9ac2dc" strokeWidth="5" strokeDasharray="1.2 1.4" />
				<path d="M2 2l12 8M14 2l3 6M28 3l-8 6M2 10l6 3M6 2l9 6" stroke="#aaa" />
				<ellipse cx="15" cy="18" rx="4" ry="6" fill="#000" />
			</>
		),
	},
	{
		name: "cMT Viewer",
		art: (
			<>
				<rect width="30" height="23" rx="6" fill="#ededed" />
				<path d="M1 20h28v6a4 4 0 0 1-4 4H5a4 4 0 0 1-4-4z" fill="#d9dadb" />
				<path d="m15 17 7 7h-4v6h-6v-6H8z" fill="#f0a030" />
				<text x="15" y="11" fontSize="10" fontWeight="700" textAnchor="middle" fill="#444" fontFamily={svgText}>cMT</text>
				<text x="15" y="17" fontSize="7" textAnchor="middle" fill="#444" fontFamily={svgText}>Viewer</text>
			</>
		),
	},
];

const Taskbar: FC = () => (
	<footer className="relative flex h-[50px] shrink-0 bg-linear-to-r from-[#24393f] via-[#203038] to-[#1a2744] text-white">
		<button type="button" aria-label="开始" className="flex w-[60px] items-center justify-center">
			<svg viewBox="0 0 20 20" className="h-5 w-5" fill="#fff">
				<path d="m0 3 8-1v7.500H0zM9 2l11-2v9.500H9zM0 10.500h8V18l-8-1zM9 10.500h11V20L9 18z" />
			</svg>
		</button>
		<label className="flex w-[358px] items-center bg-white pl-6">
			<svg viewBox="0 0 24 24" className="h-6 w-6" fill="none" stroke="#000" strokeWidth="2">
				<circle cx="11.5" cy="11" r="9.5" />
				<path d="m18 18 5 5.500" />
			</svg>
			<input type="search" aria-label="搜索" placeholder="搜索" className="ml-4 w-60 text-[19px] text-black outline-none placeholder:text-[#b5b5b5]" />
		</label>
		<button type="button" aria-label="任务视图" className="flex w-[57px] items-center justify-center pr-1">
			<svg viewBox="0 0 24 24" className="h-6 w-6" fill="none" stroke="#fff" strokeWidth="1.8">
				<path d="M9 4 4 8v7M15 4l5 4v7M7 20l5 3 5-3" />
				<circle cx="12" cy="3" r="1.8" fill="#fff" />
				<circle cx="4" cy="18" r="1.8" fill="#fff" />
				<circle cx="20" cy="18" r="1.8" fill="#fff" />
			</svg>
		</button>
		{apps.map((a) => (
			<button key={a.name} type="button" aria-label={a.name} className={clsx("flex w-[62px] flex-col items-center justify-between pt-[10px]", a.active && "bg-[#4b5c65]")}>
				<svg viewBox="0 0 30 30" className="h-[30px] w-[30px]">
					{a.art}
				</svg>
				<span className={clsx("h-[3px] bg-[#76b9ed]", a.active ? "w-full" : "w-[51px]")} />
			</button>
		))}
		<div className="ml-auto flex items-center pr-[5px]">
			<button type="button" aria-label="显示隐藏的图标" className="flex w-[30px] justify-center">
				<svg viewBox="0 0 16 9" className="h-[9px] w-4" fill="none" stroke="#fff" strokeWidth="1.5">
					<path d="m0 8.500 8-8 8 8" />
				</svg>
			</button>
			<span className="flex w-[29px] justify-center">
				<svg viewBox="0 0 14 20" className="h-5 w-3.5" fill="#fff">
					<path d="M0 2 6 1v7H0zM8 1l6 1v6H8zM0 10h6v5l-5 5zM8 10h6l-1 10-5-5z" />
				</svg>
			</span>
			<span className="flex w-[30px] justify-center">
				<svg viewBox="0 0 20 20" className="h-5 w-5" fill="none" stroke="#fff" strokeWidth="1.3">
					<path d="M1 3h4M1 3v13h11M5 3l14-2v13M7 8c2-3 5-3 7 0M14 5v3h-3M14 11c-2 2-5 2-7 0" />
					<circle cx="15.5" cy="15.5" r="4.5" fill="#f79a10" stroke="none" />
				</svg>
			</span>
			<span className="flex w-[30px] justify-center">
				<svg viewBox="0 0 20 20" className="h-5 w-5">
					<circle cx="10" cy="10" r="10" fill="#f91d22" />
					<path d="M4 9v4M7 8v6M10 6v8M13 8v5M16 6v7" stroke="#fff" strokeWidth="1.5" />
				</svg>
			</span>
			<span className="flex w-[30px] justify-center">
				<svg viewBox="0 0 20 14" className="h-3.5 w-5" fill="none" stroke="#fff" strokeWidth="1.4">
					<path d="M5 3h13v9H4V8M1 1v4h4V1M3 5v5" />
					<path d="M6 5h10v5H6z" fill="#fff" stroke="none" />
				</svg>
			</span>
			<span className="flex w-[30px] justify-center">
				<svg viewBox="0 0 16 16" className="h-4 w-4" fill="none" stroke="#fff" strokeWidth="1.3">
					<path d="M1 15C1 7 7 1 15 1M5 15C5 9 9 5 15 5M9 15c0-3 3-6 6-6M13 15l2-2" />
				</svg>
			</span>
			<span className="flex w-[29px] justify-center pb-0.5 text-[20px] leading-6">英</span>
			<time className="w-[90px] pb-0.5 text-center text-[15px] leading-6">
				22:17
				<br />
				2024/12/6
			</time>
			<button type="button" aria-label="通知" className="relative flex w-[62px] justify-center pr-2">
				<svg viewBox="0 0 22 20" className="h-5 w-[22px]">
					<path d="M0 0h22v15H10l-4 4v-4H0z" fill="#fff" />
					<path d="M5 5h12M5 9h12" stroke="#1c2a44" strokeWidth="1.5" />
				</svg>
				<span className="absolute top-2 left-[27px] flex h-5 w-5 items-center justify-center rounded-full border border-[#8a8f98] bg-[#30343c] text-[14px] leading-4">1</span>
			</button>
			<span className="h-full w-px bg-[#7d8796]" />
		</div>
		<p className="pointer-events-none absolute right-1 bottom-0 text-[38px] leading-[70px] whitespace-nowrap text-[#c3c6cc]/85">CSDN @小飞侠#983</p>
	</footer>
);

export default function App() {
	return (
		<div className="flex h-screen flex-col overflow-hidden bg-black font-['Noto_Sans_CJK_SC',sans-serif]">
			<TitleBar />
			<MenuBar />
			<Toolbar />
			<div className="h-1 shrink-0 border-t border-[#55585a] bg-[#26282a]" />
			<main className="flex min-h-0 flex-1 pt-[9px] pr-2 pb-[9px] pl-[9px]">
				<Explorer />
				<div className="mr-[9px] ml-2 flex min-w-0 flex-1 flex-col gap-[9px]">
					<TagSetEditor />
					<BuildPanel />
				</div>
				<Toolbox />
			</main>
			<div className="h-[31px] shrink-0 border-t border-[#9a9a9a] bg-[#202022]" />
			<Taskbar />
		</div>
	);
}
